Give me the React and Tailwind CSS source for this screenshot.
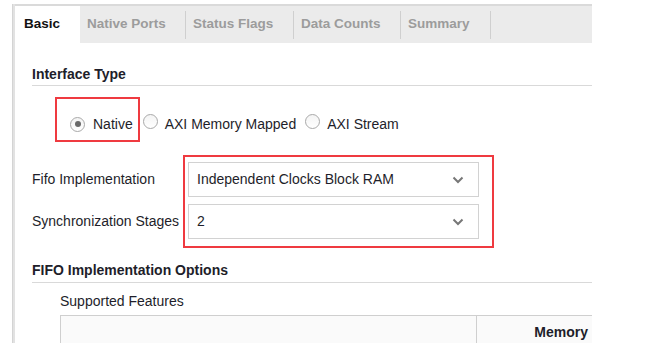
import React from "react";

function Radio({ checked }) {
  return (
    <span className="relative inline-flex items-center justify-center w-[15px] h-[15px] rounded-full border border-[#a9a9a9] bg-gradient-to-b from-[#f4f4f4] to-white">
      {checked && <span className="w-[6px] h-[6px] rounded-full bg-[#6a6a6a]" />}
    </span>
  );
}

function Chevron() {
  return (
    <svg width="12" height="8" viewBox="0 0 12 8" className="block">
      <path d="M1.5 1.5 L6 6 L10.5 1.5" fill="none" stroke="#777" strokeWidth="2" />
    </svg>
  );
}

function Select({ value }) {
  return (
    <div className="w-[291px] h-[35px] border border-[#d2d2d2] bg-white flex items-center pl-[8px] pr-[14px]">
      <span className="flex-1">{value}</span>
      <Chevron />
    </div>
  );
}

const tabs = [
  { name: "Native Ports", w: "w-[106px]" },
  { name: "Status Flags", w: "w-[108px]" },
  { name: "Data Counts", w: "w-[107px]" },
  { name: "Summary", w: "w-[90px]" },
];

export default function App() {
  return (
    <div
      className="w-[647px] h-[357px] bg-white relative overflow-hidden text-[14px] text-[#1e1e2a]"
      style={{ fontFamily: '"Liberation Sans", Arial, sans-serif' }}
    >
      <div className="ml-[12px] mt-[4px] w-[580px] h-[339px] flex">
        <div className="w-[3px] bg-[#e2e2e2] border-l border-[#d4d4d4]" />
        <div className="flex-1 flex flex-col overflow-hidden">
          {/* tab bar */}
          <div className="shrink-0 h-[39px] flex bg-[#ebebeb] border-t-2 border-[#dadada] font-bold text-[13.5px]">
            <div className="w-[65px] bg-white pl-[9px] flex items-center text-[#111]">Basic</div>
            {tabs.map((t) => (
              <div key={t.name} className={`${t.w} flex items-center`}>
                <span className="flex-1 pl-[7px] text-[#9c9c9c]">{t.name}</span>
                <span className="w-[1px] h-[28px] bg-[#cfcfcf]" />
              </div>
            ))}
          </div>

          {/* content */}
          <div className="shrink-0 flex flex-col pl-[17px] relative">
            <div className="mt-[23px] font-bold leading-[16px]">Interface Type</div>
            <div className="mt-[3px] h-[1px] bg-[#d9d9d9]" />

            <div className="mt-[30px] flex items-center h-[16px] pl-[38px]">
              <Radio checked />
              <span className="ml-[8px]">Native</span>
              <span className="ml-[10px]"><Radio /></span>
              <span className="ml-[7px]">AXI Memory Mapped</span>
              <span className="ml-[9px]"><Radio /></span>
              <span className="ml-[7px]">AXI Stream</span>
            </div>

            <div className="mt-[30px] flex items-center shrink-0">
              <span className="w-[156px]">Fifo Implementation</span>
              <Select value="Independent Clocks Block RAM" />
            </div>
            <div className="mt-[7px] flex items-center shrink-0">
              <span className="w-[156px]">Synchronization Stages</span>
              <Select value="2" />
            </div>

            <div className="mt-[23px] font-bold leading-[16px]">FIFO Implementation Options</div>
            <div className="mt-[4px] h-[1px] bg-[#d9d9d9]" />
            <div className="mt-[10px] pl-[28px] leading-[16px]">Supported Features</div>
            <div className="ml-[28px] mt-[6px] h-[40px] border-t border-l border-[#cfcfcf] bg-[#fafafa] flex">
              <div className="w-[416px] border-r border-[#cfcfcf]" />
              <div className="flex-1 text-right pr-[4px] pt-[6px] font-bold">Memory</div>
            </div>

            {/* annotation boxes */}
            <div className="absolute left-[40px] top-[54px] w-[85px] h-[45px] border-2 border-[#ef3a40]" />
            <div className="absolute left-[168px] top-[112px] w-[311px] h-[93px] border-2 border-[#ef3a40]" />
          </div>
        </div>
      </div>
    </div>
  );
}
